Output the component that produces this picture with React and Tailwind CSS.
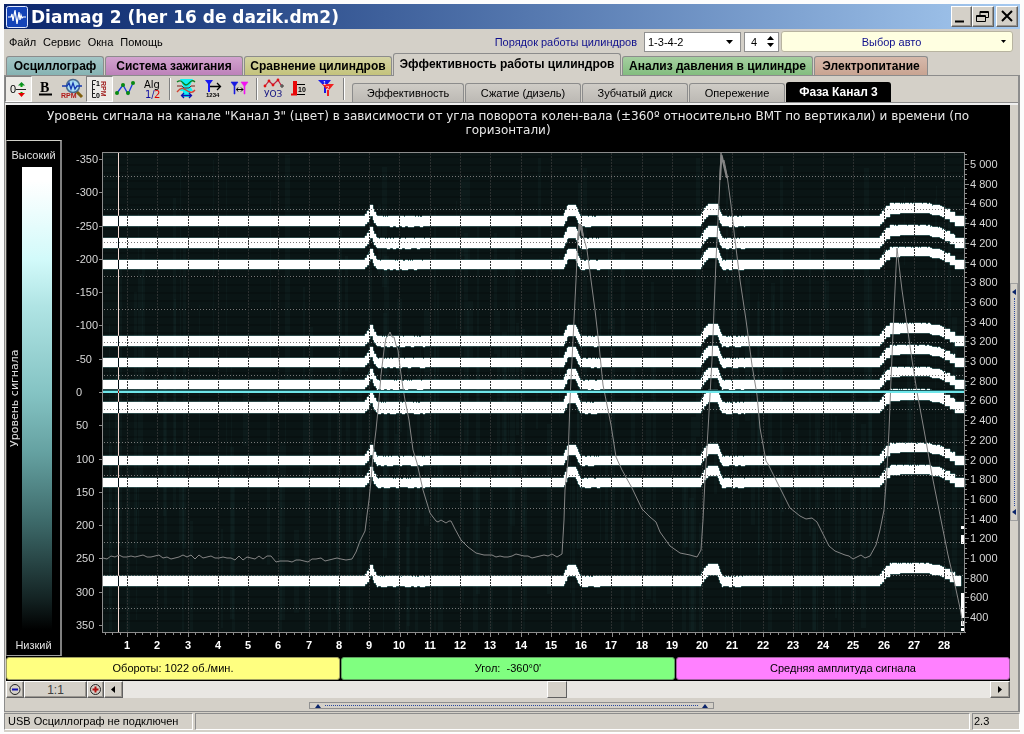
import { useState } from "react";

const mainTabs = [
  { name: "Осциллограф", style: "w-[98px] bg-linear-to-b from-[#a3c5c5] to-[#86b3b3]" },
  { name: "Система зажигания", style: "w-[138px] bg-linear-to-b from-[#d2a3cf] to-[#bd82ba]" },
  { name: "Сравнение цилиндров", style: "w-[148px] bg-linear-to-b from-[#d4d3a3] to-[#c4c37c]" },
  { name: "Эффективность работы цилиндров", style: "w-[228px] bg-[#d4d0c8]", active: true },
  { name: "Анализ давления в цилиндре", style: "w-[191px] bg-linear-to-b from-[#a5cfa0] to-[#83bd7f]" },
  { name: "Электропитание", style: "w-[114px] bg-linear-to-b from-[#d6b9ab] to-[#c9a492]" },
];

const subTabs = [
  { name: "Эффективность", style: "w-[112px]" },
  { name: "Сжатие (дизель)", style: "w-[116px]" },
  { name: "Зубчатый диск", style: "w-[106px]" },
  { name: "Опережение", style: "w-[96px]" },
  { name: "Фаза Канал 3", style: "w-[105px]", active: true },
];

// top and bottom edge of every tooth band at idle
const bands = [
  [216, 226],
  [238, 248],
  [260, 269],
  [336, 346],
  [358, 367],
  [380, 389],
  [402, 413],
  [456, 465],
  [478, 487],
  [576, 586],
];

// band shift: from x on, the band is moved up by this many pixels
const shifts = [
  [103, 0], [365, 2], [367, 5], [369, 8], [370, 11], [373, 7], [374, 4], [376, 1], [377, 0],
  [564, 3], [565, 6], [567, 10], [568, 11], [576, 9], [577, 7], [578, 4], [579, 2], [580, 0],
  [701, 2], [702, 5], [704, 8], [706, 10], [708, 12], [718, 10], [719, 7], [720, 4], [721, 2], [722, 0],
  [880, 2], [882, 5], [884, 8], [886, 10], [890, 13], [930, 12], [932, 11], [940, 10], [942, 9],
  [945, 7], [950, 4], [955, 0],
];

const rpmPoints = [
  [341, 559], [346, 560], [352, 559], [356, 552], [360, 541], [365, 531], [367, 515], [369, 500],
  [371, 480], [373, 455], [376, 430], [379, 400], [381, 375], [384, 350], [386, 338], [388, 336],
  [390, 332], [392, 337], [394, 337], [396, 345], [398, 350], [400, 367], [403, 388], [405, 400],
  [409, 420], [413, 450], [417, 463], [423, 490], [430, 513], [436, 521], [438, 522], [441, 520],
  [446, 523], [449, 521], [451, 521], [455, 529], [461, 540], [468, 547], [476, 553], [484, 555],
];

const rpmPoints2 = [
  [557, 557], [562, 554], [564, 520], [565, 490], [568, 460], [570, 400], [573, 340], [576, 280],
  [578, 235], [579, 224], [580, 228], [582, 226], [583, 235], [587, 250], [591, 280], [595, 310],
  [599, 345], [603, 385], [606, 400], [611, 425], [616, 457], [622, 470], [632, 488], [642, 509],
  [650, 517], [656, 522], [660, 532], [670, 546], [680, 553], [690, 555], [697, 557], [701, 550],
  [703, 520], [705, 480], [708, 430], [712, 360], [716, 260], [719, 200], [721, 153], [722, 162],
  [724, 160], [727, 175], [731, 205], [735, 240], [740, 280], [746, 320], [752, 365], [757, 395],
  [760, 428], [766, 461], [768, 464], [775, 478], [790, 508], [800, 516], [806, 519], [812, 518],
  [817, 522], [822, 532], [829, 546], [835, 551], [845, 555],
];

const rpmPoints3 = [
  [870, 556], [876, 545], [880, 530], [884, 510], [887, 470], [889, 430], [891, 380], [894, 310],
  [897, 248], [899, 265], [902, 290], [907, 325], [912, 360], [917, 392], [924, 430], [932, 475],
  [940, 515], [948, 555], [955, 585], [960, 608], [963, 625],
];

const noise = (n) => {
  const s = Math.sin(n * 127.1) * 43758.5453;
  return s - Math.floor(s);
};

function idle(from, to, level) {
  const list = [];
  for (let x = from; x < to; x += 4) {
    list.push([x, level + Math.round((noise(x) - 0.5) * 5)]);
  }
  return list;
}

const rpmLine = [
  ...idle(103, 230, 557),
  ...idle(231, 275, 558),
  ...idle(276, 320, 560),
  ...idle(321, 340, 559),
  ...rpmPoints,
  ...idle(488, 556, 556),
  ...rpmPoints2,
  ...idle(849, 869, 557),
  ...rpmPoints3,
]
  .map((p) => p.join(","))
  .join(" ");

function shiftAt(x) {
  let value = 0;
  for (const [start, shift] of shifts) {
    if (x >= start) value = shift;
  }
  return value;
}

function bandPath([top, bottom], index) {
  const end = index === 9 ? 961 : 965;
  let up = "";
  let down = "";

  for (let x = 103; x < end; x++) {
    const shift = shiftAt(x);
    const after = (x > 376 && x < 425) || (x > 580 && x < 600) || (x > 721 && x < 745);
    const rough = after || (x > 884 && x < 955);
    const a = top - shift + (rough && noise(x * 3 + index) > 0.8 ? 1 : 0);
    const b = bottom - shift + (after && noise(Math.floor(x / 3) + index) > 0.5 ? 1 : 0) + (shift > 2 && x < 900 ? 1 : 0);
    up += `L${x} ${a}H${x + 1}`;
    down = `L${x + 1} ${b}H${x}` + down;
  }

  return `M103 ${top}` + up + down + "Z";
}

const angleTicks = Array.from({ length: 15 }, (_, i) => (i - 7) * 50);
const gridRows = Array.from({ length: 14 }, (_, i) => Math.round(392 + (i * 50 - 325) * 0.6657) + 0.5);
const timeTicks = Array.from({ length: 28 }, (_, i) => i + 1);
const rpmTicks = Array.from({ length: 24 }, (_, i) => 5000 - i * 200);
const streaks = Array.from({ length: 170 }, (_, i) => ({
  x: 104 + Math.floor(noise(i + 1) * 856),
  y: 153 + Math.floor(noise(i + 40) * 380),
  w: 1 + Math.floor(noise(i + 80) * 5),
  h: 60 + Math.floor(noise(i + 9) * 260),
}));

const timeX = (t) => Math.round(127 + (t - 1) * 30.27) + 0.5;
const rpmY = (v) => Math.round(164 + (5000 - v) * 0.0985) + 0.5;

function Chart() {
  return (
    <svg viewBox="62 140 948 516" className="block min-w-0 flex-1 font-['Liberation_Sans',sans-serif]">
      <rect x="62" y="140" width="948" height="516" fill="#000" />
      <rect x="103" y="153" width="862" height="479" fill="#0a1515" />

      {streaks.map((s, i) => (
        <rect key={i} x={s.x} y={s.y} width={s.w} height={Math.min(s.h, 631 - s.y)} fill="#16302f" opacity="0.25" />
      ))}
      {Array.from({ length: 59 }, (_, i) => (
        <rect key={i} x="103" y={156 + i * 8} width="862" height="2" fill="#000" opacity="0.18" />
      ))}

      {bands.map((band, i) => (
        <path key={i} d={bandPath(band, i)} fill="#fff" stroke="#7cc4c4" strokeOpacity="0.6" />
      ))}
      {bands.map((band, i) => (
        <path key={i} d={bandPath(band, i)} fill="#fff" shapeRendering="crispEdges" />
      ))}

      <g fill="#fff">
        <rect x="961" y="526" width="4" height="3" />
        <rect x="961" y="535" width="4" height="9" />
        <rect x="961" y="593" width="4" height="25" />
        <rect x="961" y="621" width="4" height="5" />
        <rect x="961" y="628" width="4" height="3" />
      </g>

      <g shapeRendering="crispEdges">
        {gridRows.map((y) => (
          <line key={y} x1="104" x2="964" y1={y} y2={y} stroke="#777" strokeDasharray="1 2" />
        ))}
        {timeTicks.map((t) => (
          <line key={t} x1={timeX(t)} x2={timeX(t)} y1="153" y2="632" stroke="#2c3030" strokeDasharray="2 1" />
        ))}
      </g>

      <polyline points={rpmLine} fill="none" stroke="#858585" strokeWidth="1" />
      <path d="M578 240L580 224L583 236M720 180L721.500 155L727 178" fill="none" stroke="#858585" strokeWidth="2" />

      <rect x="103" y="390" width="862" height="3" fill="#1d5b5e" />
      <rect x="103" y="391" width="862" height="2" fill="#6fe6ea" />
      <rect x="118" y="153" width="1" height="480" fill="#fff0ea" className="mix-blend-difference" />

      <g stroke="#8c8c8c" shapeRendering="crispEdges">
        <path d="M102.500 152V633M102 152.500H965M964.500 152V633M102 632.500H966" fill="none" />
        {angleTicks.map((a) => {
          const y = Math.round(392 + a * 0.6657) + 0.5;
          return <line key={a} x1="99" x2="102" y1={y} y2={y} />;
        })}
        {Array.from({ length: 114 }, (_, i) => {
          const x = Math.round(104.500 + i * 7.5675) + 0.5;
          return <line key={i} x1={x} x2={x} y1="633" y2={(i - 3) % 4 === 0 ? 637 : 635} />;
        })}
        {Array.from({ length: 96 }, (_, i) => {
          const y = Math.round(154 + i * 4.925) + 0.5;
          return <line key={i} x1="965" x2={(i - 2) % 4 === 0 ? 969 : 967} y1={y} y2={y} />;
        })}
      </g>

      <g fill="#d8d8d8" fontSize="11">
        {angleTicks.map((a) => (
          <text key={a} x="76" y={Math.round(396 + a * 0.6657)}>
            {a}
          </text>
        ))}
        {rpmTicks.map((v) => (
          <text key={v} x="970" y={rpmY(v) + 3.5}>
            {v >= 1000 ? `${Math.floor(v / 1000)} ${String(v % 1000).padStart(3, "0")}` : v}
          </text>
        ))}
      </g>
      <g fill="#fff" fontSize="11" fontWeight="bold" textAnchor="middle">
        {timeTicks.map((t) => (
          <text key={t} x={Math.round(timeX(t)) - 1} y="649">
            {t}
          </text>
        ))}
      </g>
    </svg>
  );
}

function Icon({ children }) {
  return (
    <svg viewBox="0 0 26 26" className="block size-[26px]">
      {children}
    </svg>
  );
}

function ToolButton({ label, pressed, children }) {
  return (
    <button
      aria-label={label}
      className={
        pressed
          ? "h-[26px] w-[27px] border border-t-[#808080] border-l-[#808080] border-r-white border-b-white bg-[#eceae6]"
          : "h-[26px] w-[27px] border border-transparent"
      }
    >
      {children}
    </button>
  );
}

function Separator() {
  return <div className="mx-[2px] h-[22px] w-[2px] border-l border-[#808080] bg-white" />;
}

function Toolbar() {
  return (
    <div className="flex items-center">
      <ToolButton label="Ноль" pressed>
        <Icon>
          <text x="4" y="16" fontSize="11" fontFamily="Liberation Sans">0</text>
          <path d="M10 12.500H20" stroke="#222" />
          <path d="M15.500 10V7M15.500 15V17" stroke="#0a0" strokeWidth="2" />
          <path d="M12 8.500L15.500 5L19 8.500Z" fill="#0a9020" />
          <path d="M12 16L15.500 20L19 16Z" fill="#e00000" />
        </Icon>
      </ToolButton>
      <ToolButton label="Жирный">
        <Icon>
          <text x="7" y="15" fontSize="14" fontWeight="bold" fontFamily="Liberation Serif">B</text>
          <path d="M6 17.500H19" stroke="#000" strokeWidth="2" />
        </Icon>
      </ToolButton>
      <ToolButton label="Обороты">
        <Icon>
          <path d="M16 14L22 20" stroke="#806010" strokeWidth="3" />
          <circle cx="13" cy="9" r="6.5" fill="#a8dcf4" stroke="#456a90" strokeWidth="1.5" />
          <path d="M2 9H7L9 6L11 12L13 6L15 12L17 9H22" fill="none" stroke="#1438b0" strokeWidth="1.3" />
          <text x="1" y="21" fontSize="7" fontWeight="bold" fill="#b01818" fontFamily="Liberation Sans">RPM</text>
        </Icon>
      </ToolButton>
      <ToolButton label="Шкала" pressed>
        <Icon>
          <path d="M9 3.500H5.500V20.500H9M5.500 7.500H8M5.500 12.500H8M5.500 16.500H8" fill="none" stroke="#222" />
          <text x="9" y="9" fontSize="7" fontWeight="bold" fontFamily="Liberation Sans">1</text>
          <text x="9" y="21" fontSize="7" fontWeight="bold" fontFamily="Liberation Sans">0</text>
          <text
            transform="translate(14 4) rotate(90)"
            fontSize="7"
            fontWeight="bold"
            fill="#a02020"
            fontFamily="Liberation Sans"
          >
            RPM
          </text>
        </Icon>
      </ToolButton>
      <ToolButton label="Точки">
        <Icon>
          <path d="M3 16L9 8L14 17L19 6" fill="none" stroke="#1a3ae0" strokeWidth="1.3" />
          <g fill="#088a10">
            <circle cx="3" cy="16" r="2" />
            <circle cx="9" cy="8" r="2" />
            <circle cx="14" cy="16" r="2" />
            <circle cx="19" cy="6" r="2" />
          </g>
        </Icon>
      </ToolButton>
      <ToolButton label="Алгоритм">
        <Icon>
          <g fontSize="10" fontFamily="DejaVu Sans">
            <text x="3" y="11">Alg</text>
            <text x="4" y="21" fill="#1010a0">1/</text>
            <text x="13" y="21" fill="#e00000">2</text>
          </g>
        </Icon>
      </ToolButton>
      <Separator />
      <ToolButton label="Наложение">
        <Icon>
          <path d="M6 2H19L16 9L19 14H16V20H9V14H6L9 9Z" fill="#10f0f0" />
          <path d="M3 5C8 1 9 8 12 8S17 1 21 5" fill="none" stroke="#0a8020" strokeWidth="1.3" />
          <path d="M3 9H8L10 11H15L17 9H21" fill="none" stroke="#7a2020" />
          <path d="M3 15C7 10 9 11 12 13S18 17 21 13" fill="none" stroke="#d04030" strokeWidth="1.3" />
          <path d="M8 18.500H17M10 16L7.500 18.500L10 21M15 16L17.500 18.500L15 21" fill="none" stroke="#1010b0" strokeWidth="1.3" />
        </Icon>
      </ToolButton>
      <ToolButton label="Нумерация">
        <Icon>
          <path d="M4 3H12L9 7V15H7V7Z" fill="#1818f0" />
          <path d="M9 9.500H19M16 6L19.500 9.500L16 13" fill="none" stroke="#000" strokeWidth="1.3" />
          <text x="5" y="20" fontSize="6" fontWeight="bold" fontFamily="Liberation Sans">1234</text>
        </Icon>
      </ToolButton>
      <ToolButton label="Маркеры">
        <Icon>
          <path d="M3 5H10L7 9V17H6V9Z" fill="#1818e0" stroke="#1818e0" strokeWidth="0.6" />
          <path d="M13 5H20L17 9V17H16V9Z" fill="#f010f0" stroke="#f010f0" strokeWidth="0.6" />
          <path d="M8.500 12.500H15M10 10.500L8.500 12.500L10 14.500M13 10.500L15 12.500L13 14.500" fill="none" stroke="#000" />
        </Icon>
      </ToolButton>
      <Separator />
      <ToolButton label="УОЗ">
        <Icon>
          <path d="M4 9L8 4L12 8L17 3L20 8" fill="none" stroke="#c02040" strokeWidth="1.2" />
          <g fill="#e01010">
            <circle cx="4" cy="9" r="1.4" />
            <circle cx="8" cy="4" r="1.4" />
            <circle cx="12" cy="8" r="1.4" />
            <circle cx="17" cy="3" r="1.4" />
          </g>
          <circle cx="21" cy="9" r="1.2" fill="none" stroke="#222" />
          <text x="3" y="20" fontSize="9" fill="#101080" fontFamily="DejaVu Sans">УОЗ</text>
        </Icon>
      </ToolButton>
      <ToolButton label="Диаграмма">
        <Icon>
          <path d="M5 4H9V17H5Z" fill="#e80808" />
          <path d="M9 7.500H17M9 17.500H17" stroke="#000" />
          <path d="M3 17.500H9" stroke="#e80808" strokeWidth="2" />
          <text x="10" y="15" fontSize="7" fontWeight="bold" fontFamily="Liberation Sans">10</text>
        </Icon>
      </ToolButton>
      <ToolButton label="Фильтр">
        <Icon>
          <path d="M3 3H16L11 9V16H9V9Z" fill="#1818e8" />
          <path d="M7 7H19L14 13V19H12V13Z" fill="#f02020" />
          <text x="8" y="8" fontSize="6" fill="#fff" fontFamily="Liberation Sans">1</text>
          <text x="11" y="13" fontSize="6" fill="#fff" fontFamily="Liberation Sans">2</text>
        </Icon>
      </ToolButton>
      <Separator />
    </div>
  );
}

const raised = "border border-t-white border-l-white border-r-[#606060] border-b-[#606060] bg-[#d4d0c8] shadow-[inset_-1px_-1px_0_#9a9690]";

function TitleBar() {
  return (
    <header className="flex h-[25px] items-center gap-[3px] bg-linear-to-r from-[#0a246a] to-[#a6caf0] px-[2px]">
      <svg viewBox="0 0 22 22" className="size-[22px]">
        <rect x="0.5" y="0.5" width="21" height="21" rx="2" fill="#1444b8" stroke="#dfe8ff" />
        <path d="M2 11H5L6 8L7 15L9 4L11 18L13 6L14 14L15 9L16 12L17 11H20" fill="none" stroke="#fff" strokeWidth="1.2" />
      </svg>
      <h1 className="flex-1 font-['DejaVu_Sans',sans-serif] text-[17px] leading-6 font-bold text-white">
        Diamag 2 (her 16 de dazik.dm2)
      </h1>
      <div className="flex">
        <button aria-label="Свернуть" className={`h-[21px] w-[21px] ${raised}`}>
          <svg viewBox="0 0 19 19">
            <path d="M3 14.500H12" stroke="#000" strokeWidth="2" />
          </svg>
        </button>
        <button aria-label="Восстановить" className={`h-[21px] w-[22px] ${raised}`}>
          <svg viewBox="0 0 20 19" fill="none" stroke="#000">
            <path d="M7 8V4.500H15.500V10.500H13M7 5.500H15M3.500 8.500H12.500V14.500H3.500ZM3.500 9.500H12" />
          </svg>
        </button>
        <button aria-label="Закрыть" className={`ml-[2px] h-[21px] w-[22px] ${raised}`}>
          <svg viewBox="0 0 20 19" stroke="#000" strokeWidth="2">
            <path d="M5 4L15 14M15 4L5 14" />
          </svg>
        </button>
      </div>
    </header>
  );
}

function MenuRow() {
  const [count, setCount] = useState(4);

  return (
    <div className="flex h-[24px] items-center pt-px">
      <nav className="flex flex-1 gap-[7px] pl-[5px]">
        <button>Файл</button>
        <button>Сервис</button>
        <button>Окна</button>
        <button>Помощь</button>
      </nav>
      <label htmlFor="order" className="pr-[7px] text-[#10108c]">
        Порядок работы цилиндров
      </label>
      <div className="relative">
        <select
          id="order"
          defaultValue="1-3-4-2"
          className="block h-[20px] w-[97px] appearance-none border border-[#909090] bg-white pl-[3px] outline-none"
        >
          <option>1-3-4-2</option>
          <option>1-2-4-3</option>
        </select>
        <svg viewBox="0 0 7 4" className="pointer-events-none absolute top-2 right-2 h-1 w-[7px]">
          <path d="M0 0H7L3.500 4Z" />
        </svg>
      </div>
      <div className="ml-[3px] flex h-[20px] w-[35px] border border-[#909090] bg-white">
        <input
          aria-label="Число цилиндров"
          value={count}
          onChange={(e) => setCount(Number(e.target.value) || 0)}
          className="w-[18px] pl-[6px] outline-none"
        />
        <div className="flex flex-1 flex-col items-center justify-center gap-[3px]">
          <button aria-label="Больше" onClick={() => setCount(count + 1)}>
            <svg viewBox="0 0 7 4" className="block h-1 w-[7px]">
              <path d="M0 4H7L3.500 0Z" />
            </svg>
          </button>
          <button aria-label="Меньше" onClick={() => setCount(count - 1)}>
            <svg viewBox="0 0 7 4" className="block h-1 w-[7px]">
              <path d="M0 0H7L3.500 4Z" />
            </svg>
          </button>
        </div>
      </div>
      <button className="mr-[7px] ml-[2px] flex h-[21px] w-[232px] items-center rounded-[3px] border border-[#b8b4a0] bg-[#ffffe1] pr-[6px] text-[#10108c]">
        <span className="flex-1">Выбор авто</span>
        <svg viewBox="0 0 5 3" className="h-[3px] w-[5px]">
          <path d="M0 0H5L2.500 3Z" />
        </svg>
      </button>
    </div>
  );
}

function MainTabs({ active, onSelect }) {
  return (
    <div role="tablist" className="flex h-[23px] items-end gap-px border-b border-[#8c8c8c] px-[2px]">
      {mainTabs.map((tab) => (
        <button
          key={tab.name}
          role="tab"
          aria-selected={tab.name === active}
          onClick={() => onSelect(tab.name)}
          className={`${tab.style} ${
            tab.active ? "-mb-px h-[23px] pb-[2px]" : "h-[19px]"
          } rounded-t-[3px] border border-b-0 border-[#8c8c8c] text-[12px] leading-4 font-bold whitespace-nowrap`}
        >
          {tab.name}
        </button>
      ))}
    </div>
  );
}

function SubTabs({ active, onSelect }) {
  return (
    <div role="tablist" className="flex flex-1 items-end gap-px self-end pl-[5px]">
      {subTabs.map((tab) => (
        <button
          key={tab.name}
          role="tab"
          aria-selected={tab.name === active}
          onClick={() => onSelect(tab.name)}
          className={`${tab.style} ${
            tab.active
              ? "h-[20px] bg-black text-[12px] font-bold text-white"
              : "h-[19px] border border-b-0 border-[#8c8c8c] bg-linear-to-b from-[#cfccc6] to-[#bcb9b4] text-[11px]"
          } rounded-t-[3px] leading-4 whitespace-nowrap`}
        >
          {tab.name}
        </button>
      ))}
    </div>
  );
}

function Legend() {
  return (
    <div className="flex w-[56px] flex-col border-t border-r-2 border-b border-l border-t-[#d0d0c8] border-r-[#808080] border-b-[#a0a0a0] border-l-[#404040] text-center text-[11px] leading-4 text-[#e0e0e0]">
      <span className="pt-[6px] pb-1">Высокий</span>
      <div className="flex flex-1">
        <span className="flex w-[15px] rotate-180 items-center justify-center font-['DejaVu_Sans',sans-serif] text-[11px] leading-[15px] [writing-mode:vertical-rl]">
          Уровень сигнала
        </span>
        <div className="w-[30px] bg-[linear-gradient(#fff_3%,#d2fafa_20%,#b0e4e4_30%,#84c3c3_49%,#64a0a0_62%,#3c6868_77%,#142424_93%,#000)]" />
      </div>
      <span className="pt-[7px] pb-[2px]">Низкий</span>
    </div>
  );
}

function ScrollRow() {
  return (
    <div className="flex h-[17px] bg-[#d4d0c8]">
      <button aria-label="Уменьшить" className={`w-[18px] ${raised}`}>
        <svg viewBox="0 0 16 15" className="block">
          <circle cx="8" cy="7.5" r="5" fill="none" stroke="#222" />
          <path d="M5 7.500H11" stroke="#1010b0" strokeWidth="2" />
        </svg>
      </button>
      <button className={`w-[63px] text-[12px] leading-[14px] text-[#404040] ${raised}`}>1:1</button>
      <button aria-label="Увеличить" className={`w-[17px] ${raised}`}>
        <svg viewBox="0 0 15 15" className="block">
          <circle cx="7.5" cy="7.5" r="5" fill="none" stroke="#222" />
          <path d="M4.500 7.500H10.500M7.500 4.500V10.500" stroke="#b01010" strokeWidth="2" />
        </svg>
      </button>
      <button aria-label="Влево" className={`w-[19px] ${raised}`}>
        <svg viewBox="0 0 17 15" className="block">
          <path d="M10 4V11L6 7.500Z" />
        </svg>
      </button>
      <input
        type="range"
        aria-label="Прокрутка"
        defaultValue="50"
        className="h-[17px] min-w-0 flex-1 appearance-none bg-[#e9e7e3] [&::-webkit-slider-thumb]:h-[17px] [&::-webkit-slider-thumb]:w-[20px] [&::-webkit-slider-thumb]:appearance-none [&::-webkit-slider-thumb]:border [&::-webkit-slider-thumb]:border-t-white [&::-webkit-slider-thumb]:border-r-[#606060] [&::-webkit-slider-thumb]:border-b-[#606060] [&::-webkit-slider-thumb]:border-l-white [&::-webkit-slider-thumb]:bg-[#d4d0c8]"
      />
      <button aria-label="Вправо" className={`w-[20px] ${raised}`}>
        <svg viewBox="0 0 18 15" className="block">
          <path d="M7 4V11L11 7.500Z" />
        </svg>
      </button>
    </div>
  );
}

function App() {
  const [tab, setTab] = useState("Эффективность работы цилиндров");
  const [subTab, setSubTab] = useState("Фаза Канал 3");

  return (
    <div className="bg-[#fcfcfc] px-1 py-1 font-['Liberation_Sans',sans-serif] text-[11px] leading-4 text-black">
      <div className="bg-[#d4d0c8]">
        <TitleBar />
        <MenuRow />
        <MainTabs active={tab} onSelect={setTab} />

        <main className="border-r-2 border-b border-l border-[#8c8c8c]">
          <div className="flex h-[27px] border-b border-[#8c8c8c]">
            <Toolbar />
            <SubTabs active={subTab} onSelect={setSubTab} />
          </div>

          <div className="flex border-t-2 border-[#f0f0f0] pl-px">
            <div className="min-w-0 flex-1 bg-black">
              <h2 className="px-6 pt-[4px] pb-[3px] text-center font-['DejaVu_Sans',sans-serif] text-[12px] leading-[14px] text-[#e8e8e8]">
                Уровень сигнала на канале "Канал 3" (цвет) в зависимости от угла поворота колен-вала (±360º относительно
                ВМТ по вертикали) и времени (по горизонтали)
              </h2>

              <div className="flex">
                <Legend />
                <Chart />
              </div>

              <div className="grid grid-cols-3 gap-px py-px text-center text-[11px] leading-[21px]">
                <div className="rounded-[3px] border border-[#a0a060] bg-[#ffff80]">Обороты: 1022 об./мин.</div>
                <div className="rounded-[3px] border border-[#60a060] bg-[#80ff80]">
                  Угол:&nbsp; -360°0'
                </div>
                <div className="rounded-[3px] border border-[#a060a0] bg-[#ff80ff]">Средняя амплитуда сигнала</div>
              </div>

              <ScrollRow />
            </div>

            <div className="flex w-[8px] items-center">
              <button
                aria-label="Показать панель"
                className="flex h-[238px] w-[8px] flex-col items-center justify-between border border-[#a0a0a0] py-[5px]"
              >
                <svg viewBox="0 0 4 6" className="h-[6px] w-1">
                  <path d="M4 0V6L0 3Z" fill="#0a246a" />
                </svg>
                <span className="my-[3px] flex-1 border-l border-dotted border-[#2848a0]" />
                <svg viewBox="0 0 4 6" className="h-[6px] w-1">
                  <path d="M4 0V6L0 3Z" fill="#0a246a" />
                </svg>
              </button>
            </div>
          </div>

          <div className="flex h-[13px] items-center justify-center pt-[2px]">
            <button
              aria-label="Показать таблицу"
              className="flex h-[7px] w-[405px] items-center gap-1 border border-[#909090] px-[5px]"
            >
              <svg viewBox="0 0 6 4" className="h-1 w-[6px]">
                <path d="M0 4H6L3 0Z" fill="#0a246a" />
              </svg>
              <span className="flex-1 border-t border-dotted border-[#2848a0]" />
              <svg viewBox="0 0 6 4" className="h-1 w-[6px]">
                <path d="M0 4H6L3 0Z" fill="#0a246a" />
              </svg>
            </button>
          </div>
        </main>

        <footer className="flex gap-[2px] border-b border-white pt-px pb-[2px] leading-[15px]">
          <div className="w-[189px] border border-t-[#8c8c8c] border-r-white border-b-white border-l-[#8c8c8c] pl-[3px]">
            USB Осциллограф не подключен
          </div>
          <div className="flex-1 border border-t-[#8c8c8c] border-r-white border-b-white border-l-[#8c8c8c]" />
          <div className="w-[48px] border border-t-[#8c8c8c] border-r-white border-b-white border-l-[#8c8c8c] pl-px">
            2.3
          </div>
        </footer>
      </div>
    </div>
  );
}

export default App;
